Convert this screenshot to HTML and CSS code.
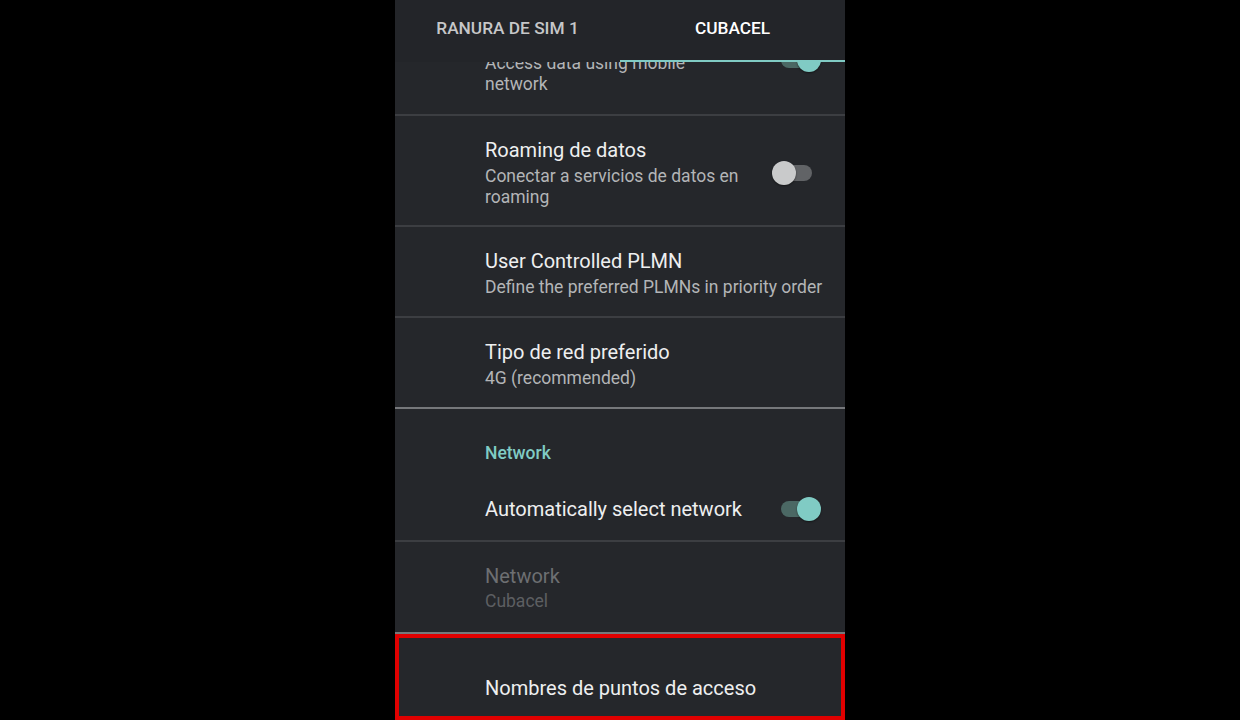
FILE: index.html
```html
<!DOCTYPE html>
<html lang="es">
<head>
<meta charset="utf-8">
<title>Redes móviles</title>
<link rel="stylesheet" href="styles.css">
</head>
<body>
<div class="phone">
  <div class="tabbar">
    <div class="tab">RANURA DE SIM 1</div>
    <div class="tab active">CUBACEL</div>
  </div>
  <div class="viewport">
    <div class="list">
      <div class="row first">
        <div class="text">
          <div class="title">Datos móviles</div>
          <div class="sub">Access data using mobile network</div>
        </div>
        <div class="widget"><span class="switch on"></span></div>
      </div>
      <div class="divider"></div>
      <div class="row">
        <div class="text">
          <div class="title">Roaming de datos</div>
          <div class="sub">Conectar a servicios de datos en roaming</div>
        </div>
        <div class="widget"><span class="switch"></span></div>
      </div>
      <div class="divider"></div>
      <div class="row plain">
        <div class="text wide">
          <div class="title">User Controlled PLMN</div>
          <div class="sub">Define the preferred PLMNs in priority order</div>
        </div>
      </div>
      <div class="divider"></div>
      <div class="row plain">
        <div class="text wide">
          <div class="title">Tipo de red preferido</div>
          <div class="sub">4G (recommended)</div>
        </div>
      </div>
      <div class="divider strong"></div>
      <div class="category">Network</div>
      <div class="row single">
        <div class="text">
          <div class="title">Automatically select network</div>
        </div>
        <div class="widget"><span class="switch on"></span></div>
      </div>
      <div class="divider"></div>
      <div class="row disabled">
        <div class="text wide">
          <div class="title">Network</div>
          <div class="sub">Cubacel</div>
        </div>
      </div>
      <div class="divider strong"></div>
      <div class="row highlight">
        <div class="text wide">
          <div class="title">Nombres de puntos de acceso</div>
        </div>
      </div>
    </div>
  </div>
</div>
</body>
</html>
```

FILE: styles.css
```css
* { box-sizing: border-box; }

html, body {
  margin: 0;
  padding: 0;
  height: 100%;
  background: #000;
  overflow: hidden;
}

body {
  display: flex;
  justify-content: center;
  font-family: Roboto, "Noto Sans", "Liberation Sans", sans-serif;
}

.phone {
  width: 450px;
  height: 720px;
  background: #25272b;
  display: flex;
  flex-direction: column;
  overflow: hidden;
}

.tabbar {
  height: 62px;
  display: flex;
  background: #232529;
  flex: 0 0 auto;
}

.tab {
  flex: 1 1 0;
  display: flex;
  align-items: center;
  justify-content: center;
  padding-bottom: 6px;
  font-size: 17.3px;
  line-height: 22px;
  font-weight: 500;
  color: #c6c7c8;
  white-space: nowrap;
}

.tab.active {
  color: #ffffff;
  border-bottom: 2px solid #80cbc4;
  padding-bottom: 4px;
}

.viewport {
  flex: 1 1 auto;
  overflow: hidden;
}

.list {
  margin-top: -59px;
}

.row {
  display: flex;
  align-items: center;
  padding: 22px 0 17px 0;
}

.row.first {
  padding-bottom: 19px;
}

.row.plain {
  padding-bottom: 18px;
}

.text {
  padding-left: 90px;
  width: 350px;
  display: flex;
  flex-direction: column;
  gap: 4px;
}

.text.wide {
  width: auto;
  flex: 1 1 auto;
  padding-right: 12px;
}

.title {
  font-size: 20px;
  line-height: 24px;
  color: #eeeff0;
}

.sub {
  font-size: 17.5px;
  line-height: 21px;
  color: #b3b5b7;
}

.widget {
  flex: 1 1 auto;
  display: flex;
  justify-content: flex-end;
  padding-right: 24px;
}

.switch {
  position: relative;
  display: block;
  width: 49px;
  height: 24px;
}

.switch::before {
  content: "";
  position: absolute;
  left: 7px;
  right: 9px;
  top: 4px;
  height: 16px;
  border-radius: 8px;
  background: #616366;
}

.switch::after {
  content: "";
  position: absolute;
  left: 0;
  top: 0;
  width: 24px;
  height: 24px;
  border-radius: 50%;
  background: #c9cacb;
  box-shadow: 0 1px 2px rgba(0, 0, 0, 0.45);
}

.switch.on::before {
  left: 9px;
  right: 8px;
  background: #4b6864;
}

.switch.on::after {
  left: 25px;
  background: #80cbc4;
}

.divider {
  height: 2px;
  background: #3c3e42;
}

.divider.strong {
  background: #76787b;
}

.category {
  padding: 34px 0 0 90px;
  font-size: 17.5px;
  line-height: 21px;
  font-weight: 500;
  color: #80cbc4;
}

.row.single {
  padding: 33px 0 19px 0;
}

.row.disabled {
  padding: 22px 0 20px 0;
}

.row.disabled .text {
  gap: 3px;
}

.row.disabled .title {
  color: #6d6f72;
}

.row.disabled .sub {
  color: #5d5f62;
}

.row.highlight {
  height: 86px;
  border: 4px solid #e00000;
  align-items: flex-start;
  padding: 38px 0 0 0;
}

.row.highlight .text {
  padding-left: 86px;
}
```
